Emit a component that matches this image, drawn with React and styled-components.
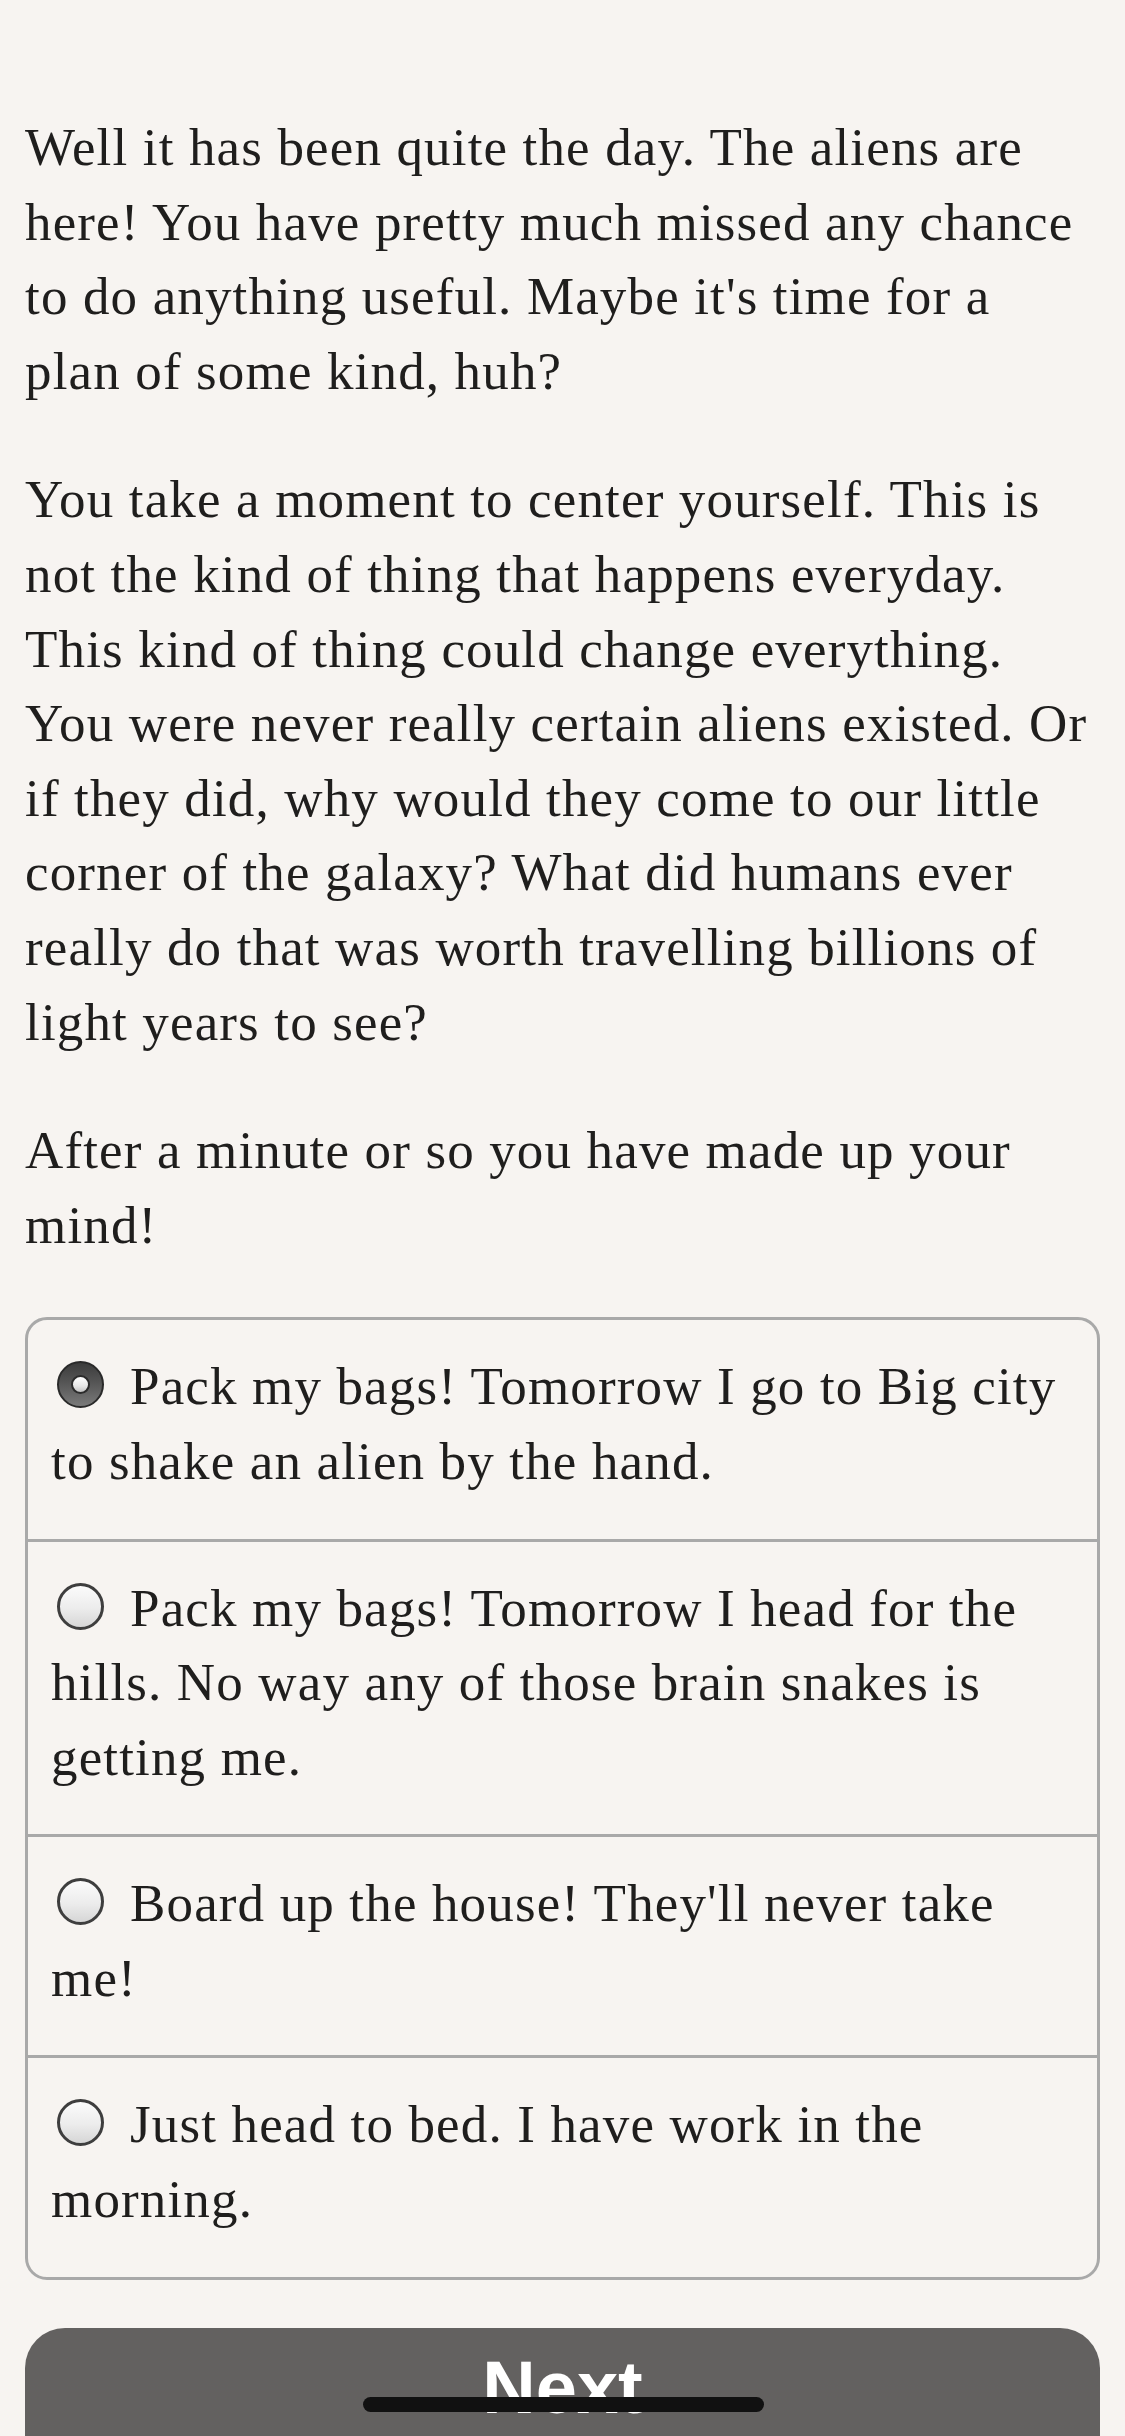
// dependences
import { useState } from 'react';

// styles
import styled, { createGlobalStyle } from 'styled-components';

const GlobalStyle = createGlobalStyle`
    html, body {
        margin: 0;
        padding: 0;
        background-color: #f7f4f1;
    }
`;

const Page = styled.div`
    min-height: 2436px;
    padding: 110px 25px 0;
    box-sizing: border-box;
    background-color: #f7f4f1;
    color: #1f1e1d;
    font-family: "Liberation Serif", "Times New Roman", serif;
    font-size: 53px;
    line-height: 74.6px;
    letter-spacing: 1.15px;
`;

const Paragraph = styled.p`
    margin: 0 0 54px;
`;

const Line = styled.span`
    display: block;
    white-space: nowrap;
`;

const Choices = styled.div`
    margin-top: 55px;
    border: 3px solid #a9a9a9;
    border-radius: 22px;
    overflow: hidden;
`;

const Choice = styled.label`
    display: block;
    padding: 29px 23px 40px;
    cursor: pointer;

    & + & {
        border-top: 3px solid #a9a9a9;
    }
`;

const Radio = styled.span`
    display: inline-block;
    position: relative;
    width: 47px;
    height: 47px;
    margin: 0 26px 0 6px;
    vertical-align: -4px;
    border-radius: 50%;
    box-sizing: border-box;
    border: ${(p) => (p.$checked ? '2px solid #2a2a2a' : '3px solid #3e3e3e')};
    background: ${(p) =>
        p.$checked
            ? 'linear-gradient(180deg, #3c3c3c 0%, #555 45%, #7a7a7a 100%)'
            : 'linear-gradient(180deg, #fbfbfb 0%, #ececec 55%, #d6d6d6 100%)'};

    &::after {
        content: '';
        display: ${(p) => (p.$checked ? 'block' : 'none')};
        position: absolute;
        left: 50%;
        top: 50%;
        width: 19px;
        height: 19px;
        margin: -9.5px 0 0 -9.5px;
        border-radius: 50%;
        box-sizing: border-box;
        border: 2px solid #2b2b2b;
        background: linear-gradient(180deg, #ffffff 0%, #e6e6e6 60%, #c4c4c4 100%);
    }
`;

const NextButton = styled.button`
    display: block;
    width: 100%;
    height: 150px;
    margin-top: 48px;
    padding: 0 0 30px;
    border: none;
    border-radius: 40px;
    background-color: #636160;
    color: #ffffff;
    font-family: "Liberation Sans", Arial, sans-serif;
    font-weight: bold;
    font-size: 74px;
    letter-spacing: 0;
`;

const HomeBar = styled.div`
    position: fixed;
    left: 50%;
    top: 2397px;
    width: 401px;
    height: 15px;
    margin-left: -200px;
    border-radius: 8px;
    background-color: #111;
`;

const story = [
    [
        'Well it has been quite the day. The aliens are',
        'here! You have pretty much missed any chance',
        "to do anything useful. Maybe it's time for a",
        'plan of some kind, huh?',
    ],
    [
        'You take a moment to center yourself. This is',
        'not the kind of thing that happens everyday.',
        'This kind of thing could change everything.',
        'You were never really certain aliens existed. Or',
        'if they did, why would they come to our little',
        'corner of the galaxy? What did humans ever',
        'really do that was worth travelling billions of',
        'light years to see?',
    ],
    [
        'After a minute or so you have made up your',
        'mind!',
    ],
];

const choices = [
    ['Pack my bags! Tomorrow I go to Big city', 'to shake an alien by the hand.'],
    ['Pack my bags! Tomorrow I head for the', 'hills. No way any of those brain snakes is', 'getting me.'],
    ["Board up the house! They'll never take", 'me!'],
    ['Just head to bed. I have work in the', 'morning.'],
];

export default function App() {
    const [picked, setPicked] = useState(0);

    return <>
        <GlobalStyle />
        <Page>
            {story.map((lines, i) => (
                <Paragraph key={i}>
                    {lines.map((l, j) => <Line key={j}>{l}</Line>)}
                </Paragraph>
            ))}

            <Choices>
                {choices.map((lines, i) => (
                    <Choice key={i} onClick={() => setPicked(i)}>
                        {lines.map((l, j) => (
                            <Line key={j}>
                                {j === 0 && <Radio $checked={picked === i} />}
                                {l}
                            </Line>
                        ))}
                    </Choice>
                ))}
            </Choices>

            <NextButton>Next</NextButton>
        </Page>
        <HomeBar />
    </>
}
